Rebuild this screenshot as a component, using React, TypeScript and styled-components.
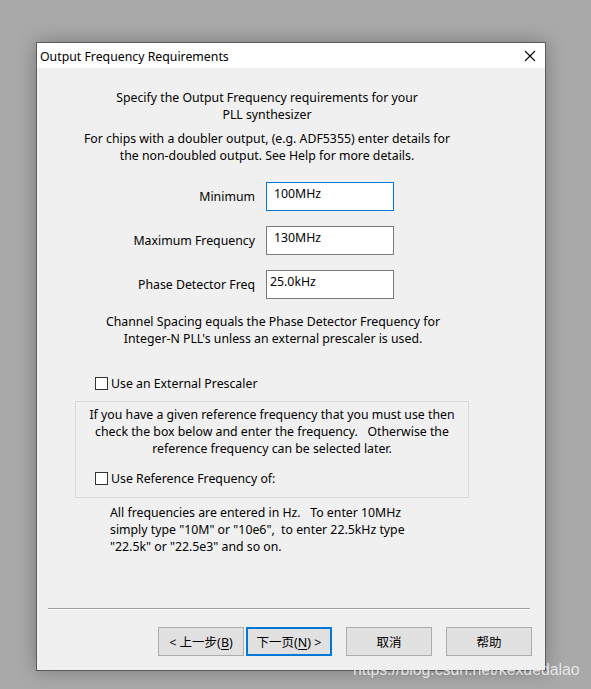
import styled, { createGlobalStyle } from "styled-components";

const GlobalStyle = createGlobalStyle`
  html, body {
    margin: 0;
    padding: 0;
    background: #a9a9a9;
  }
  body {
    width: 591px;
    height: 689px;
    overflow: hidden;
    font-family: "Noto Sans", "Noto Sans CJK SC", sans-serif;
    font-size: 12.3px;
    color: #000;
  }
  * {
    box-sizing: border-box;
  }
`;

const Screen = styled.div`
  position: relative;
  width: 591px;
  height: 689px;
  padding: 42px 0 0 36px;
`;

const Window = styled.div`
  width: 510px;
  height: 629px;
  border: 1px solid #5c5c5c;
  background: #f0f0f0;
  display: flex;
  flex-direction: column;
  box-shadow: 0 0 18px rgba(0, 0, 0, 0.28);
`;

const TitleBar = styled.div`
  height: 25px;
  background: #fff;
  display: flex;
  align-items: center;
  justify-content: space-between;
  padding: 0 9px 0 3px;
`;

const Title = styled.span`
  line-height: 17px;
  padding-top: 1px;
`;

const Body = styled.div`
  flex: 1;
  display: flex;
  flex-direction: column;
`;

// $center is the x of the text's centre, measured from the window's inner left edge
const Note = styled.p<{ $center: number; $top: number }>`
  margin: ${(p) => p.$top}px 0 0 ${(p) => p.$center - 235}px;
  width: 470px;
  text-align: center;
  line-height: 17px;
  white-space: nowrap;
`;

const Form = styled.div`
  margin-top: 18px;
  display: grid;
  grid-template-columns: 218px 128px;
  grid-auto-rows: 29px;
  column-gap: 11px;
  row-gap: 15px;
`;

const Label = styled.label`
  align-self: center;
  text-align: right;
  line-height: 17px;
`;

const Field = styled.div<{ $focused?: boolean; $pad: number }>`
  background: #fff;
  border: 1px solid ${(p) => (p.$focused ? "#0078d7" : "#7a7a7a")};
  padding: 2px 0 0 ${(p) => p.$pad}px;
  line-height: 17px;
`;

const CheckRow = styled.div<{ $top: number; $left: number }>`
  margin: ${(p) => p.$top}px 0 0 ${(p) => p.$left}px;
  display: flex;
  align-items: center;
  gap: 3px;
  height: 17px;
  line-height: 17px;
`;

const Box = styled.span`
  width: 13px;
  height: 13px;
  border: 1px solid #333;
  background: #fff;
`;

const Group = styled.div`
  margin: 9px 0 0 38px;
  width: 394px;
  border: 1px solid #d9d9d9;
  padding: 4px 0 10px;
  display: flex;
  flex-direction: column;
`;

const GroupText = styled.p`
  margin: 0;
  text-align: center;
  line-height: 17px;
  white-space: nowrap;
`;

const Footnote = styled.p`
  margin: 6px 0 0 73px;
  line-height: 17px;
  white-space: nowrap;
`;

const Footer = styled.div`
  margin-top: auto;
  padding: 0 13px 14px 11px;
  display: flex;
  flex-direction: column;
`;

const Separator = styled.div`
  height: 2px;
  margin-right: 2px;
  border-top: 1px solid #a0a0a0;
  border-bottom: 1px solid #fff;
`;

const Buttons = styled.div`
  margin-top: 17px;
  display: flex;
  justify-content: flex-end;
`;

const Button = styled.button<{ $primary?: boolean; $gap: number }>`
  margin-left: ${(p) => p.$gap}px;
  width: 86px;
  height: 29px;
  background: #e1e1e1;
  border: ${(p) => (p.$primary ? "2px solid #0078d7" : "1px solid #adadad")};
  font-family: "Noto Sans", "Noto Sans CJK SC", sans-serif;
  font-size: 12.5px;
  color: #000;
  padding: 0;
  & u {
    text-underline-offset: 2px;
  }
`;

const Watermark = styled.div`
  position: absolute;
  left: 353px;
  top: 661px;
  font-family: "Liberation Sans", sans-serif;
  font-size: 15.8px;
  line-height: 18px;
  color: rgba(255, 255, 255, 0.8);
  text-shadow: 0 0 1px rgba(0, 0, 0, 0.12);
  white-space: nowrap;
`;

function CloseIcon() {
  return (
    <svg width="12" height="12" viewBox="0 0 12 12">
      <path d="M1 1 L11 11 M11 1 L1 11" stroke="#000" strokeWidth="1.1" />
    </svg>
  );
}

function Check({ top, left, children }: { top: number; left: number; children: string }) {
  return (
    <CheckRow $top={top} $left={left}>
      <Box />
      <span>{children}</span>
    </CheckRow>
  );
}

export default function App() {
  return (
    <Screen>
      <GlobalStyle />
      <Window>
        <TitleBar>
          <Title>Output Frequency Requirements</Title>
          <CloseIcon />
        </TitleBar>
        <Body>
          <Note $center={230} $top={21}>
            Specify the Output Frequency requirements for your
            <br />
            PLL synthesizer
          </Note>
          <Note $center={230} $top={7}>
            For chips with a doubler output, (e.g. ADF5355) enter details for
            <br />
            the non-doubled output. See Help for more details.
          </Note>
          <Form>
            <Label>Minimum</Label>
            <Field $focused $pad={7}>100MHz</Field>
            <Label>Maximum Frequency</Label>
            <Field $pad={7}>130MHz</Field>
            <Label>Phase Detector Freq</Label>
            <Field $pad={3}>25.0kHz</Field>
          </Form>
          <Note $center={236} $top={14}>
            Channel Spacing equals the Phase Detector Frequency for
            <br />
            Integer-N PLL's unless an external prescaler is used.
          </Note>
          <Check top={28} left={58}>Use an External Prescaler</Check>
          <Group>
            <GroupText>
              If you have a given reference frequency that you must use then
              <br />
              check the box below and enter the frequency.&nbsp;&nbsp; Otherwise the
              <br />
              reference frequency can be selected later.
            </GroupText>
            <Check top={13} left={19}>Use Reference Frequency of:</Check>
          </Group>
          <Footnote>
            All frequencies are entered in Hz.&nbsp;&nbsp; To enter 10MHz
            <br />
            simply type "10M" or "10e6",&nbsp; to enter 22.5kHz type
            <br />
            "22.5k" or "22.5e3" and so on.
          </Footnote>
          <Footer>
            <Separator />
            <Buttons>
              <Button $gap={0}>
                &lt; 上一步(<u>B</u>)
              </Button>
              <Button $primary $gap={2}>
                下一页(<u>N</u>) &gt;
              </Button>
              <Button $gap={14}>取消</Button>
              <Button $gap={14}>帮助</Button>
            </Buttons>
          </Footer>
        </Body>
      </Window>
      <Watermark>https://blog.csdn.net/kexuedalao</Watermark>
    </Screen>
  );
}
